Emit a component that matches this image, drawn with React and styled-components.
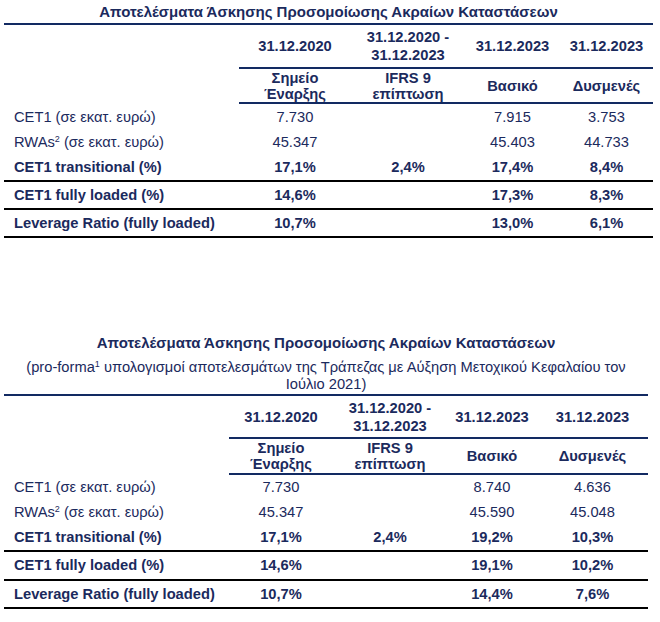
import React from "react"
import styled, { createGlobalStyle } from "styled-components"

const GlobalStyle = createGlobalStyle`
  body {
    margin: 0;
    background: #ffffff;
    font-family: "Liberation Sans", Arial, sans-serif;
    color: #1b2a5d;
  }
`

const Page = styled.div`
  padding: 0 4px;
`

const Section = styled.section`
  width: ${(p) => p.$width}px;
  margin-top: ${(p) => p.$top || 0}px;
`

const Title = styled.div`
  text-align: center;
  font-weight: bold;
  font-size: 15px;
  line-height: 17px;
  padding-top: ${(p) => p.$padTop}px;
  padding-bottom: ${(p) => p.$padBottom}px;
`

const Subtitle = styled.div`
  text-align: center;
  font-size: 14.7px;
  line-height: 17px;
  margin-top: 8px;
  padding-bottom: 1px;
`

const Sup = styled.sup`
  font-size: 9px;
  vertical-align: 5px;
  line-height: 0;
`

const Table = styled.table`
  width: 100%;
  table-layout: fixed;
  border-collapse: separate;
  border-spacing: 0;
  border-top: 2px solid #122a62;
  font-size: 14.7px;
`

const HeadCell = styled.th`
  height: ${(p) => p.$h}px;
  padding: 0;
  font-weight: bold;
  text-align: center;
  vertical-align: middle;
  line-height: ${(p) => p.$lh}px;
  border-bottom: ${(p) => (p.$blank ? "none" : "2px solid #122a62")};
  ${(p) => (p.$blank ? `height: ${p.$h + 2}px;` : "")}
`

const Row = styled.tr`
  font-weight: ${(p) => (p.$bold ? "bold" : "normal")};
`

const Cell = styled.td`
  height: ${(p) => p.$h}px;
  padding: 0;
  line-height: 17px;
  vertical-align: middle;
  text-align: ${(p) => (p.$label ? "left" : "center")};
  padding-left: ${(p) => (p.$label ? "10px" : "0")};
  white-space: nowrap;
  border-bottom: ${(p) => (p.$line ? "2px solid #000000" : "none")};
`

const rowsFirst = [
  { label: "CET1 (σε εκατ. ευρώ)", values: ["7.730", "", "7.915", "3.753"] },
  { label: "RWAs", sup: "2", tail: " (σε εκατ. ευρώ)", values: ["45.347", "", "45.403", "44.733"] },
  { label: "CET1 transitional (%)", bold: true, line: true, values: ["17,1%", "2,4%", "17,4%", "8,4%"] },
  { label: "CET1 fully loaded (%)", bold: true, line: true, values: ["14,6%", "", "17,3%", "8,3%"] },
  { label: "Leverage Ratio (fully loaded)", bold: true, line: true, values: ["10,7%", "", "13,0%", "6,1%"] },
]

const rowsSecond = [
  { label: "CET1 (σε εκατ. ευρώ)", values: ["7.730", "", "8.740", "4.636"] },
  { label: "RWAs", sup: "2", tail: " (σε εκατ. ευρώ)", values: ["45.347", "", "45.590", "45.048"] },
  { label: "CET1 transitional (%)", bold: true, line: true, values: ["17,1%", "2,4%", "19,2%", "10,3%"] },
  { label: "CET1 fully loaded (%)", bold: true, line: true, values: ["14,6%", "", "19,1%", "10,2%"] },
  { label: "Leverage Ratio (fully loaded)", bold: true, line: true, values: ["10,7%", "", "14,4%", "7,6%"] },
]

const StressTable = ({ cols, head1, head2, rowHeights, rows }) => (
  <Table>
    <colgroup>
      {cols.map((w, i) => (
        <col key={i} style={{ width: w }} />
      ))}
    </colgroup>
    <thead>
      <tr>
        <HeadCell $blank $h={head1} $lh={18} />
        <HeadCell $h={head1} $lh={18}>31.12.2020</HeadCell>
        <HeadCell $h={head1} $lh={18}>
          31.12.2020 -<br />
          31.12.2023
        </HeadCell>
        <HeadCell $h={head1} $lh={18}>31.12.2023</HeadCell>
        <HeadCell $h={head1} $lh={18}>31.12.2023</HeadCell>
      </tr>
      <tr>
        <HeadCell $blank $h={head2} $lh={16} />
        <HeadCell $h={head2} $lh={16}>
          Σημείο
          <br />
          Έναρξης
        </HeadCell>
        <HeadCell $h={head2} $lh={16}>
          IFRS 9
          <br />
          επίπτωση
        </HeadCell>
        <HeadCell $h={head2} $lh={16}>Βασικό</HeadCell>
        <HeadCell $h={head2} $lh={16}>Δυσμενές</HeadCell>
      </tr>
    </thead>
    <tbody>
      {rows.map((r, i) => (
        <Row key={i} $bold={r.bold}>
          <Cell $label $line={r.line} $h={rowHeights[i]}>
            {r.label}
            {r.sup && <Sup>{r.sup}</Sup>}
            {r.tail}
          </Cell>
          {r.values.map((v, j) => (
            <Cell key={j} $line={r.line} $h={rowHeights[i]}>
              {v}
            </Cell>
          ))}
        </Row>
      ))}
    </tbody>
  </Table>
)

const TITLE = "Αποτελέσματα Άσκησης Προσομοίωσης Ακραίων Καταστάσεων"

export default function App() {
  return (
    <>
      <GlobalStyle />
      <Page>
        <Section $width={649}>
          <Title $padTop={3} $padBottom={3}>
            {TITLE}
          </Title>
          <StressTable
            cols={[235, 112, 114, 95, 93]}
            head1={42}
            head2={33}
            rowHeights={[26, 25, 25, 26, 26]}
            rows={rowsFirst}
          />
        </Section>
        <Section $width={644} $top={96}>
          <Title $padTop={0} $padBottom={0}>
            {TITLE}
          </Title>
          <Subtitle>
            (pro-forma<Sup>1</Sup> υπολογισμοί αποτελεσμάτων της Τράπεζας με Αύξηση Μετοχικού Κεφαλαίου τον
            <br />
            Ιούλιο 2021)
          </Subtitle>
          <StressTable
            cols={[225, 104, 114, 90, 111]}
            head1={41}
            head2={34}
            rowHeights={[25, 25, 25, 27, 26]}
            rows={rowsSecond}
          />
        </Section>
      </Page>
    </>
  )
}
